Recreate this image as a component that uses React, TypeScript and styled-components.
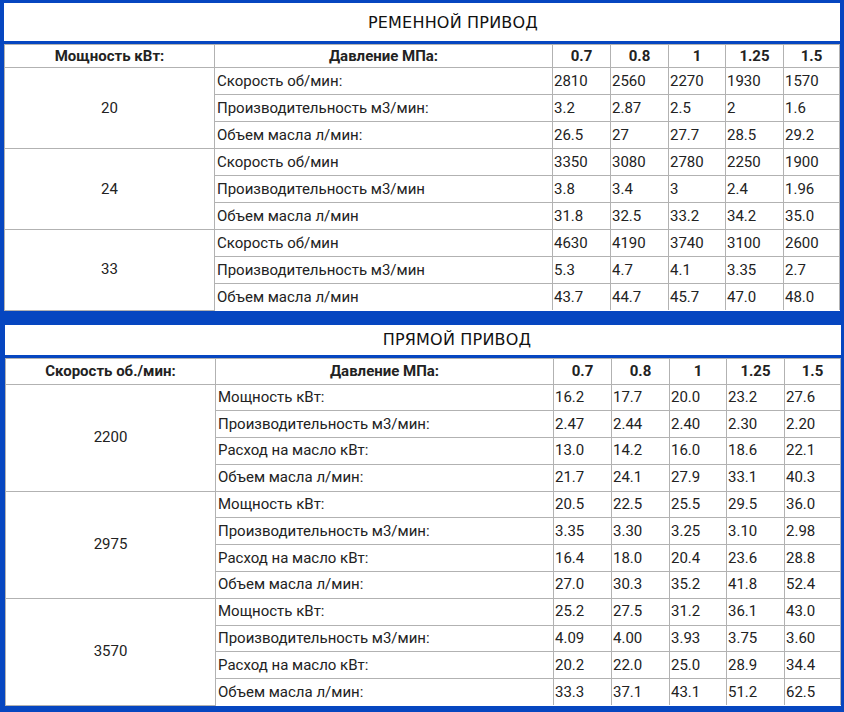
import React, { FC } from "react";
import styled, { createGlobalStyle } from "styled-components";

type Group = {
  key: string;
  rows: { label: string; values: string[] }[];
};

type Sheet = {
  title: string;
  titleHeight: number;
  titleShift: number;
  headHeight: number;
  rowHeight: number;
  firstHead: string;
  groups: Group[];
};

const pressures = ["0.7", "0.8", "1", "1.25", "1.5"];
const colWidths = [210, 338, 58, 58, 57, 58];

const belt: Sheet = {
  title: "РЕМЕННОЙ ПРИВОД",
  titleHeight: 38,
  titleShift: 62,
  headHeight: 22,
  rowHeight: 26,
  firstHead: "Мощность кВт:",
  groups: [
    {
      key: "20",
      rows: [
        { label: "Скорость об/мин:", values: ["2810", "2560", "2270", "1930", "1570"] },
        { label: "Производительность м3/мин:", values: ["3.2", "2.87", "2.5", "2", "1.6"] },
        { label: "Объем масла л/мин:", values: ["26.5", "27", "27.7", "28.5", "29.2"] },
      ],
    },
    {
      key: "24",
      rows: [
        { label: "Скорость об/мин", values: ["3350", "3080", "2780", "2250", "1900"] },
        { label: "Производительность м3/мин", values: ["3.8", "3.4", "3", "2.4", "1.96"] },
        { label: "Объем масла л/мин", values: ["31.8", "32.5", "33.2", "34.2", "35.0"] },
      ],
    },
    {
      key: "33",
      rows: [
        { label: "Скорость об/мин", values: ["4630", "4190", "3740", "3100", "2600"] },
        { label: "Производительность м3/мин", values: ["5.3", "4.7", "4.1", "3.35", "2.7"] },
        { label: "Объем масла л/мин", values: ["43.7", "44.7", "45.7", "47.0", "48.0"] },
      ],
    },
  ],
};

const direct: Sheet = {
  title: "ПРЯМОЙ ПРИВОД",
  titleHeight: 30,
  titleShift: 68,
  headHeight: 25,
  rowHeight: 25.8,
  firstHead: "Скорость об./мин:",
  groups: [
    {
      key: "2200",
      rows: [
        { label: "Мощность кВт:", values: ["16.2", "17.7", "20.0", "23.2", "27.6"] },
        { label: "Производительность м3/мин:", values: ["2.47", "2.44", "2.40", "2.30", "2.20"] },
        { label: "Расход на масло кВт:", values: ["13.0", "14.2", "16.0", "18.6", "22.1"] },
        { label: "Объем масла л/мин:", values: ["21.7", "24.1", "27.9", "33.1", "40.3"] },
      ],
    },
    {
      key: "2975",
      rows: [
        { label: "Мощность кВт:", values: ["20.5", "22.5", "25.5", "29.5", "36.0"] },
        { label: "Производительность м3/мин:", values: ["3.35", "3.30", "3.25", "3.10", "2.98"] },
        { label: "Расход на масло кВт:", values: ["16.4", "18.0", "20.4", "23.6", "28.8"] },
        { label: "Объем масла л/мин:", values: ["27.0", "30.3", "35.2", "41.8", "52.4"] },
      ],
    },
    {
      key: "3570",
      rows: [
        { label: "Мощность кВт:", values: ["25.2", "27.5", "31.2", "36.1", "43.0"] },
        { label: "Производительность м3/мин:", values: ["4.09", "4.00", "3.93", "3.75", "3.60"] },
        { label: "Расход на масло кВт:", values: ["20.2", "22.0", "25.0", "28.9", "34.4"] },
        { label: "Объем масла л/мин:", values: ["33.3", "37.1", "43.1", "51.2", "62.5"] },
      ],
    },
  ],
};

const Global = createGlobalStyle`
  html, body {
    margin: 0;
    padding: 0;
    background: #0646c0;
  }
`;

const Page = styled.div`
  width: 844px;
  height: 712px;
  box-sizing: border-box;
  background: #0646c0;
  padding-top: 3px;
  display: flex;
  flex-direction: column;
  gap: 14px;
  overflow: hidden;
`;

const Section = styled.section<{ $left: number; $right: number }>`
  margin: 0 ${({ $right }) => $right}px 0 ${({ $left }) => $left}px;
  display: flex;
  flex-direction: column;
  gap: 3px;
`;

const Title = styled.h2<{ $height: number; $shift: number }>`
  margin: 0;
  height: ${({ $height }) => $height}px;
  background: #fff;
  display: flex;
  align-items: center;
  justify-content: center;
  padding-left: ${({ $shift }) => $shift}px;
  font-family: "DejaVu Sans", sans-serif;
  font-size: 16px;
  font-weight: 400;
  color: #111;
  letter-spacing: 0.2px;
`;

const Table = styled.table`
  width: 100%;
  background: #fff;
  border-collapse: collapse;
  table-layout: fixed;
  font-family: Roboto, "Liberation Sans", sans-serif;
  font-size: 15px;
  line-height: 17px;
  color: #222;

  td,
  th {
    border: 1px solid #b2b2b2;
    padding: 0 2px;
    white-space: nowrap;
    overflow: hidden;
  }

  tr:last-child td {
    border-bottom: none;
  }
`;

const Col = styled.col<{ $w?: number }>`
  width: ${({ $w }) => ($w ? `${$w}px` : "auto")};
`;

const Head = styled.th<{ $height: number }>`
  height: ${({ $height }) => $height}px;
  font-weight: 700;
  text-align: center;
`;

const KeyCell = styled.td`
  text-align: center;
  vertical-align: middle;
`;

const Cell = styled.td<{ $height: number }>`
  height: ${({ $height }) => $height}px;
  text-align: left;
  vertical-align: middle;
  && {
    padding-left: 1px;
  }
`;

const Label = styled(Cell)`
  && {
    padding-left: 2px;
  }
`;

const SheetTable: FC<{ sheet: Sheet; left: number; right: number }> = ({ sheet, left, right }) => (
  <Section $left={left} $right={right}>
    <Title $height={sheet.titleHeight} $shift={sheet.titleShift}>
      {sheet.title}
    </Title>
    <Table>
      <colgroup>
        {colWidths.map((w, i) => (
          <Col key={i} $w={w} />
        ))}
        <Col />
      </colgroup>
      <thead>
        <tr>
          <Head $height={sheet.headHeight}>{sheet.firstHead}</Head>
          <Head $height={sheet.headHeight}>Давление МПа:</Head>
          {pressures.map((p) => (
            <Head key={p} $height={sheet.headHeight}>
              {p}
            </Head>
          ))}
        </tr>
      </thead>
      <tbody>
        {sheet.groups.map((g) =>
          g.rows.map((r, i) => (
            <tr key={g.key + r.label}>
              {i === 0 && <KeyCell rowSpan={g.rows.length}>{g.key}</KeyCell>}
              <Label $height={sheet.rowHeight}>{r.label}</Label>
              {r.values.map((v, j) => (
                <Cell key={j} $height={sheet.rowHeight}>
                  {v}
                </Cell>
              ))}
            </tr>
          ))
        )}
      </tbody>
    </Table>
  </Section>
);

const App: FC = () => (
  <>
    <Global />
    <Page>
      <SheetTable sheet={belt} left={4} right={4} />
      <SheetTable sheet={direct} left={5} right={3} />
    </Page>
  </>
);

export default App;
